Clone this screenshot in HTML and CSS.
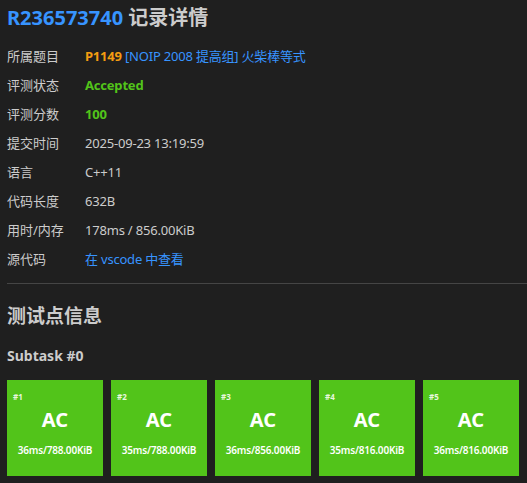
FILE: index.html
```html
<!DOCTYPE html>
<html lang="zh">
<head>
<meta charset="utf-8">
<link rel="stylesheet" href="styles.css">
</head>
<body>
<div class="page">
  <h1 class="title"><span class="rid">R236573740</span> 记录详情</h1>
  <div class="info">
    <div class="row"><div class="label">所属题目</div><div class="value"><span class="pid">P1149</span> <span class="link">[NOIP 2008 提高组] 火柴棒等式</span></div></div>
    <div class="row"><div class="label">评测状态</div><div class="value ok">Accepted</div></div>
    <div class="row"><div class="label">评测分数</div><div class="value ok">100</div></div>
    <div class="row"><div class="label">提交时间</div><div class="value">2025-09-23 13:19:59</div></div>
    <div class="row"><div class="label">语言</div><div class="value">C++11</div></div>
    <div class="row"><div class="label">代码长度</div><div class="value">632B</div></div>
    <div class="row"><div class="label">用时/内存</div><div class="value">178ms / 856.00KiB</div></div>
    <div class="row"><div class="label">源代码</div><div class="value link">在 vscode 中查看</div></div>
  </div>
  <hr class="sep">
  <h2 class="section">测试点信息</h2>
  <h3 class="subtask">Subtask #0</h3>
  <div class="cases">
    <div class="case"><div class="cid">#1</div><div class="res">AC</div><div class="stat">36ms/788.00KiB</div></div>
    <div class="case"><div class="cid">#2</div><div class="res">AC</div><div class="stat">35ms/788.00KiB</div></div>
    <div class="case"><div class="cid">#3</div><div class="res">AC</div><div class="stat">36ms/856.00KiB</div></div>
    <div class="case"><div class="cid">#4</div><div class="res">AC</div><div class="stat">35ms/816.00KiB</div></div>
    <div class="case"><div class="cid">#5</div><div class="res">AC</div><div class="stat">36ms/816.00KiB</div></div>
  </div>
</div>
</body>
</html>
```
FILE: styles.css
```css
html, body {
  margin: 0;
  padding: 0;
  background: #1f1f1f;
}
body {
  font-family: "Noto Sans", "Noto Sans CJK SC", sans-serif;
  color: #cccccc;
  font-size: 13px;
}
.page {
  padding: 4px 0 0 7px;
}
.title {
  margin: 0;
  font-size: 20px;
  line-height: 28px;
  font-weight: 700;
  color: #cccccc;
}
.rid { color: #3794ff; }
.info {
  margin-top: 9px;
  display: flex;
  flex-direction: column;
}
.row {
  display: flex;
  height: 29px;
  align-items: center;
}
.label {
  width: 78px;
  flex: none;
}
.value { letter-spacing: -0.2px; }
.pid { color: #f39c11; font-weight: 700; }
.link { color: #3794ff; }
.ok { color: #52c41a; font-weight: 700; }
.sep {
  margin: 10px 0 0 0;
  border: none;
  border-top: 1px solid #454545;
  height: 0;
}
.section {
  margin: 18px 0 0 0;
  font-size: 19px;
  line-height: 28px;
  font-weight: 700;
}
.subtask {
  margin: 16px 0 0 0;
  font-size: 14px;
  line-height: 20px;
  font-weight: 700;
}
.cases {
  display: flex;
  gap: 8px;
  margin-top: 14px;
}
.case {
  width: 96px;
  height: 96px;
  background: #52c41a;
  color: #ffffff;
  display: flex;
  flex-direction: column;
  align-items: center;
}
.cid {
  align-self: flex-start;
  font-size: 8px;
  line-height: 10px;
  margin: 12px 0 0 6px;
  font-weight: 700;
  color: #e8f7de;
}
.res {
  font-size: 20px;
  line-height: 26px;
  font-weight: 700;
  margin-top: 5px;
}
.stat {
  font-size: 10px;
  line-height: 14px;
  font-weight: 600;
  margin-top: 10px;
  letter-spacing: -0.2px;
}
```
